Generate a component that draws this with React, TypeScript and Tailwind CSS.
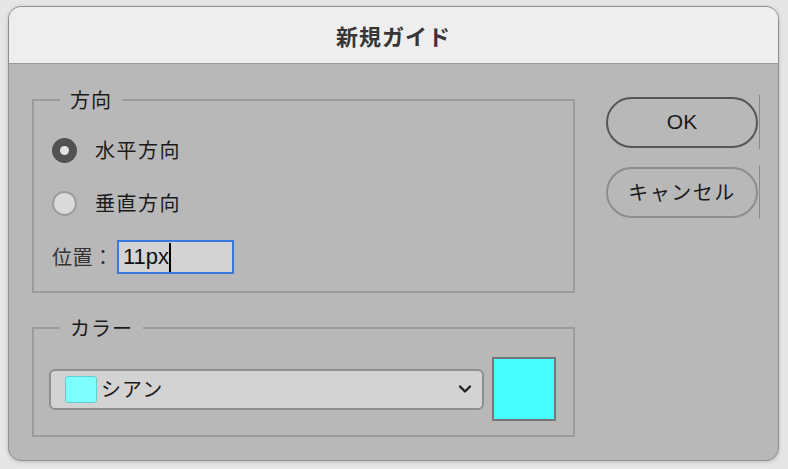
import { useState } from "react";

const jp = { fontFamily: '"Noto Sans CJK JP", "Noto Sans", sans-serif' };
const latin = { fontFamily: '"Liberation Sans", "Noto Sans CJK JP", sans-serif' };

function Radio({ checked, label }: { checked: boolean; label: string }) {
  return (
    <label className="flex items-center h-[26px] gap-[18px]">
      {checked ? (
        <span className="w-[25px] h-[25px] rounded-full bg-[#525252] flex items-center justify-center">
          <span className="w-[9px] h-[9px] rounded-full bg-[#e4e4e4]" />
        </span>
      ) : (
        <span className="w-[25px] h-[25px] rounded-full bg-[#dadada] border-2 border-[#9c9c9c]" />
      )}
      <span className="text-[20px] tracking-[1.5px] text-[#1a1a1a] leading-[26px]">{label}</span>
    </label>
  );
}

export default function App() {
  const [dir, setDir] = useState<"h" | "v">("h");

  return (
    <div className="w-[788px] h-[469px] bg-[#e6e6e6] pl-[8px] pt-[6px]" style={jp}>
      <div className="w-[771px] h-[455px] rounded-[13px] overflow-hidden border border-[#8e8e8e] shadow-[0_1px_4px_rgba(0,0,0,0.18)] flex flex-col bg-[#b8b8b8]">
        {/* title bar */}
        <div className="h-[57px] shrink-0 bg-[#eeeeee] border-b border-[#9a9a9a] flex items-center justify-center">
          <span className="text-[22px] font-bold text-[#363636] tracking-[1px]">新規ガイド</span>
        </div>

        <div className="flex pl-[23px] pt-[23px]">
          {/* left column */}
          <div className="w-[543px] flex flex-col gap-[22px]">
            <fieldset className="border-2 border-[#9b9b9b] pl-[18px] pt-[24px] pb-[17px]">
              <legend className="ml-[8px] px-[10px] text-[20px] leading-[26px] tracking-[1px] text-[#1a1a1a]">方向</legend>
              <div className="flex flex-col">
                <div onClick={() => setDir("h")}>
                  <Radio checked={dir === "h"} label="水平方向" />
                </div>
                <div className="mt-[27px]" onClick={() => setDir("v")}>
                  <Radio checked={dir === "v"} label="垂直方向" />
                </div>
                <div className="mt-[24px] flex items-center h-[34px]">
                  <span className="text-[20px] tracking-[0.5px] text-[#333] w-[65px]">位置：</span>
                  <div className="w-[117px] h-[34px] border-2 border-[#3a78dc] bg-[#d3d3d3] flex items-center pl-[4px]">
                    <span className="text-[22px] text-[#111] leading-none" style={latin}>11px</span>
                    <span className="w-[2px] h-[29px] bg-black" />
                  </div>
                </div>
              </div>
            </fieldset>

            <fieldset className="border-2 border-[#9b9b9b] pl-[15px] pr-[17px] pt-[16px] pb-[14px]">
              <legend className="ml-[11px] px-[10px] text-[20px] leading-[26px] tracking-[1px] text-[#1a1a1a]">カラー</legend>
              <div className="flex items-center gap-[8px]">
                <div className="w-[435px] h-[41px] bg-[#d3d3d3] border-2 border-[#8f8f8f] rounded-[6px] flex items-center pl-[14px] pr-[10px]">
                  <span className="w-[32px] h-[27px] rounded-[3px] bg-[#80ffff] border border-[#5fcfd6]" />
                  <span className="ml-[4px] text-[20px] tracking-[1px] text-[#1a1a1a]">シアン</span>
                  <svg className="ml-auto" width="14" height="10" viewBox="0 0 14 10">
                    <path d="M2 2.5 L7 7.5 L12 2.5" fill="none" stroke="#222" strokeWidth="2.4" strokeLinecap="round" strokeLinejoin="round" />
                  </svg>
                </div>
                <div className="w-[64px] h-[64px] bg-[#48ffff] border-2 border-[#777]" />
              </div>
            </fieldset>
          </div>

          {/* buttons */}
          <div className="ml-[31px] pt-[8px] flex flex-col gap-[16px]">
            <div className="flex items-center">
              <button className="w-[152px] h-[51px] rounded-full border-2 border-[#565656] text-[21px] text-[#1a1a1a]" style={latin}>
                OK
              </button>
              <span className="w-px h-[54px] bg-[#8a8a8a] ml-[1px]" />
            </div>
            <div className="flex items-center">
              <button className="w-[152px] h-[51px] rounded-full border-2 border-[#8d8d8d] text-[20px] tracking-[1.5px] text-[#1a1a1a]">
                キャンセル
              </button>
              <span className="w-px h-[54px] bg-[#8a8a8a] ml-[1px]" />
            </div>
          </div>
        </div>
      </div>
    </div>
  );
}
